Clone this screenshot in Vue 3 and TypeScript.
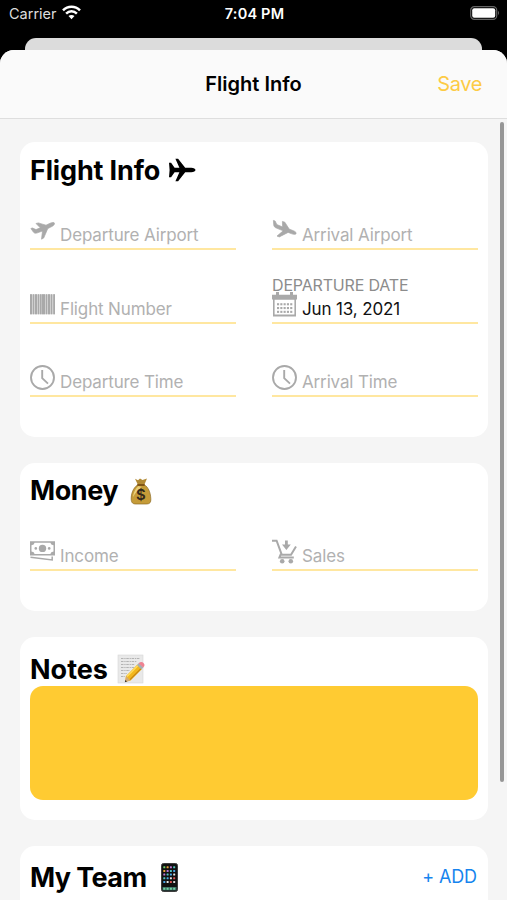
<script setup lang="ts">
interface Field {
  icon: 'depart' | 'arrive' | 'barcode' | 'calendar' | 'clock' | 'cash' | 'cart'
  text: string
  label?: string
}

const flightFields: Field[] = [
  { icon: 'depart', text: 'Departure Airport' },
  { icon: 'arrive', text: 'Arrival Airport' },
  { icon: 'barcode', text: 'Flight Number' },
  { icon: 'calendar', text: 'Jun 13, 2021', label: 'DEPARTURE DATE' },
  { icon: 'clock', text: 'Departure Time' },
  { icon: 'clock', text: 'Arrival Time' },
]
const moneyFields: Field[] = [
  { icon: 'cash', text: 'Income' },
  { icon: 'cart', text: 'Sales' },
]
const groups = [
  { id: 'flight', title: 'Flight Info', fields: flightFields },
  { id: 'money', title: 'Money', fields: moneyFields },
]
const appColors = ['#6fd36b', '#e8e8e8', '#b977d8', '#d8d8d8', '#4aa7e8', '#e9a13b', '#e05252', '#53c7c0']
const apps = Array.from({ length: 20 }, (_, i) => ({
  x: 2.3 + (i % 4) * 3.3,
  y: 3.2 + Math.floor(i / 4) * 3.7,
  color: appColors[(i * 5 + Math.floor(i / 4)) % appColors.length],
}))
const dots = Array.from({ length: 15 }, (_, i) => ({ x: 5 + (i % 5) * 3.3, y: 11.2 + Math.floor(i / 5) * 3.8 }))
</script>

<template>
  <div class="phone">
    <header class="status">
      <div class="carrier">
        <span>Carrier</span>
        <svg width="19" height="15" viewBox="0 0 19 15">
          <g fill="none" stroke="#fff" stroke-width="2.5">
            <path d="M1 5.4C5.8.5 13.2.5 18 5.4" />
            <path d="M4.1 8.6C7.2 5.6 11.8 5.6 14.9 8.6" />
          </g>
          <path d="M6.5 11.1C8.2 9.6 10.8 9.6 12.5 11.1L9.5 14.2Z" fill="#fff" />
        </svg>
      </div>
      <span class="time">7:04 PM</span>
      <svg class="battery" width="30" height="14" viewBox="0 0 30 14">
        <rect x=".7" y=".7" width="26" height="12.6" rx="3.6" fill="none" stroke="#656565" stroke-width="1.2" />
        <rect x="2.2" y="2.2" width="23" height="9.6" rx="2" fill="#fff" />
        <path d="M28 4.8Q30 7 28 9.2Z" fill="#656565" />
      </svg>
    </header>
    <div class="back-sheet"></div>
    <main class="sheet">
      <nav class="nav">
        <span></span>
        <h1>Flight Info</h1>
        <button class="save" type="button">Save</button>
      </nav>
      <div class="content">
        <section v-for="g in groups" :key="g.id" class="card" :class="g.id">
          <h2>
            <span>{{ g.title }}</span>
            <svg v-if="g.id === 'flight'" class="plane" width="28" height="26" viewBox="0 0 28 26">
              <path d="M1 5.8H3.1L6.6 10.7H11.4L7.4 1.8H10.1L17.2 10.7H23.2C25.8 10.7 27.5 11.8 27.5 13S25.8 15.3 23.2 15.3H17.2L10.1 24.2H7.4L11.4 15.3H6.6L3.1 20.2H1L1.6 13Z" />
            </svg>
            <svg v-else class="bag" width="22" height="28" viewBox="0 0 22 28">
              <path d="M5 1.7L8 3.2L10 1.4L12.5 3L17 1.5L14.2 8H8Z" fill="#b28a35" />
              <path d="M7.5 8C3 11 1.1 17 1.2 22C1.3 26 3 27 6 27H16C20 27 21 25.5 20.8 21.5C20.5 15 18 10 14.6 8Z" fill="#c59b38" stroke="#8d6a24" stroke-width=".7" />
              <path d="M8.5 9C5 12 3 17 3.2 20C5 16 9 12 12 10Z" fill="#ead07b" />
              <path d="M7.3 8H14.7" stroke="#7c5115" stroke-width="1.8" />
              <text x="11" y="23.2" text-anchor="middle" font-size="15" font-weight="600" fill="#33291b">$</text>
            </svg>
          </h2>
          <div class="fields">
            <div v-for="f in g.fields" :key="f.text" class="field" :class="{ filled: f.label }">
              <div v-if="f.label" class="caption">{{ f.label }}</div>
              <div class="row">
                <svg class="icon" width="25" height="25" viewBox="0 0 25 25">
                  <path v-if="f.icon === 'depart'" class="bold" d="M.9 10.5L2.5 10L6 11.6L10.3 9.8L6 5.5L8.3 4.9L16 7.2L20.2 5.2C22.4 4.2 24.5 4.2 24.5 5.5C24.4 7.4 22.4 8.2 20.5 9.2L17.8 10.5L13.7 20L11.5 21.2L12.5 13L6.7 15.1C4.8 15.5 4.2 15 3.4 14.1Z" />
                  <path v-else-if="f.icon === 'arrive'" class="bold" d="M1.4 2.4L3.1 3L4.8 6.6L10.6 8.9L10.4 3.4L12.8 4.2L17.2 11.1L21.8 12.9C23.8 13.7 24.6 15 24 15.8C23.3 16.8 20.9 16.3 19.2 15.6L16.1 14.4L7.3 18.9L5 18.1L11.2 12.8L4.4 10.1C2.6 9.3 1.8 8.3 1.7 6.8Z" />
                  <g v-else-if="f.icon === 'barcode'">
                    <path fill="#cfcfcf" d="M0 2.3H25V22.3H0Z" />
                    <path d="M0 2.3H2V22.3H0ZM3 2.3H4V22.3H3ZM5 2.3H7V22.3H5ZM8 2.3H9V22.3H8ZM10 2.3H11V22.3H10ZM11.6 2.3H15V22.3H11.6ZM16 2.3H17V22.3H16ZM18 2.3H20V22.3H18ZM21 2.3H22V22.3H21ZM23.3 2.3H25V22.3H23.3Z" />
                  </g>
                  <g v-else-if="f.icon === 'calendar'">
                    <path fill-rule="evenodd" d="M0 2.8H4V0H7V2.8H18V0H21V2.8H25V7.4H24V24.4H1V7.4H0ZM2.6 7.8V22.6H22.4V7.8Z" />
                    <rect v-for="(d, i) in dots" :key="i" :x="d.x" :y="d.y" width="2.1" height="2.1" />
                  </g>
                  <g v-else-if="f.icon === 'clock'" fill="none" stroke="#a9a9a9">
                    <circle cx="12.5" cy="12.5" r="11.5" stroke-width="1.9" />
                    <path d="M12.2 5V13.2L18 18.6" stroke-width="1.9" />
                  </g>
                  <g v-else-if="f.icon === 'cash'">
                    <path fill-rule="evenodd" d="M0 2.2H25V16.6H0ZM1.5 6.3V12.6Q4.3 12.8 4.6 15.1H20.4Q20.7 12.8 23.5 12.6V6.3Q20.7 6 20.4 3.7H4.6Q4.3 6 1.5 6.3Z" />
                    <circle cx="12.5" cy="9.4" r="3.7" />
                    <circle cx="5.8" cy="9.4" r="1.3" /><circle cx="19.2" cy="9.4" r="1.3" />
                    <path d="M.5 18.2L22.2 21V17.6" fill="none" stroke="#a9a9a9" stroke-width="1.5" />
                  </g>
                  <g v-else>
                    <path d="M0 1.7H4.6L9.8 15.8H19L24 7.6M8.9 14.8L7.4 18.4H21.8" fill="none" stroke="#a9a9a9" stroke-width="2" />
                    <path d="M13 1.5H15.8V5.6H18.8L14.4 11L10 5.6H13Z" />
                    <circle cx="10.2" cy="22.3" r="2.3" /><circle cx="18.8" cy="22.3" r="2.3" />
                  </g>
                </svg>
                <span class="value">{{ f.text }}</span>
              </div>
            </div>
          </div>
        </section>

        <section class="card notes">
          <h2>
            <span>Notes</span>
            <svg class="memo" width="28" height="30" viewBox="0 0 28 30">
              <rect x="1" y="1" width="25" height="28" fill="#e9e9e9" stroke="#d8d8d8" stroke-width=".6" />
              <path d="M4 4.5H23M4 7.5H20M4 10.5H18M4 13.5H17M4 16.5H13M4 19.5H10M4 22.5H8" stroke="#a6a6a6" stroke-width=".8" stroke-dasharray="2.5 .8 1.3 .7" />
              <path d="M9 22L20.4 10.5L25 15L13.6 26.4L8 28Z" fill="#f2b71d" />
              <path d="M10 22.5L21 11.5" stroke="#ffdc5b" stroke-width="1.4" />
              <path d="M13 25.7L24 14.7" stroke="#c58413" stroke-width="1.2" />
              <path d="M9 22L13.4 26.4L8 28Z" fill="#d4aa72" />
              <path d="M8.4 26L10 27.5L7.8 28.3Z" fill="#333" />
              <path d="M20 11L22 9L26.4 13.3L24.4 15.4Z" fill="#a5afb2" />
              <path d="M21.5 9.3Q24.5 7 26.7 9.2Q28.5 11.3 26.2 13.5Z" fill="#ef8291" />
            </svg>
          </h2>
          <div class="note-area"></div>
        </section>

        <section class="card team">
          <h2>
            <span>My Team</span>
            <svg class="mobile" width="17" height="29" viewBox="0 0 17 29">
              <rect x=".5" y=".5" width="16" height="28" rx="2" fill="#111" stroke="#3d3d3d" />
              <rect v-for="(a, i) in apps" :key="i" :x="a.x" :y="a.y" width="2" height="2" rx=".5" :fill="a.color" />
              <rect x="1.5" y="24" width="14" height="3.4" fill="#3b6963" />
              <path d="M2.3 25.7H15" stroke="#72d5a1" stroke-width="2" stroke-dasharray="2 1.3" />
            </svg>
          </h2>
          <button class="add" type="button">+ ADD</button>
        </section>
      </div>
      <div class="scrollbar"></div>
    </main>
  </div>
</template>

<style>
body { margin: 0; background: #000; overflow: hidden; }
</style>

<style scoped>
.phone { width: 507px; height: 900px; overflow: hidden; background: #000; font-family: Inter, "Liberation Sans", sans-serif; display: flex; flex-direction: column; }
.phone * { box-sizing: border-box; }
h1, h2 { margin: 0; }
button { border: 0; padding: 0; background: none; font: inherit; }
.status { height: 38px; flex: none; display: grid; grid-template-columns: 1fr auto 1fr; color: #fff; padding: 0 7px 0 9px; font-size: 14.5px; line-height: 28px; }
.carrier { display: flex; gap: 5px; color: #ddd; }
.carrier svg { margin-top: 5px; }
.time { font-weight: 600; letter-spacing: .2px; }
.battery { justify-self: end; margin-top: 6px; }
.back-sheet { height: 12px; flex: none; margin: 0 25px; background: #dcdcdc; border-radius: 11px 11px 0 0; }
.sheet { position: relative; height: 850px; flex: none; background: #f5f5f5; border-radius: 14px 14px 0 0; overflow: hidden; }
.nav { height: 69px; display: grid; grid-template-columns: 1fr auto 1fr; align-items: center; padding: 0 25px; background: #fafafa; border-bottom: 1px solid #dedede; }
.nav h1 { font-size: 20px; font-weight: 600; }
.save { justify-self: end; color: #fdcb45; font-size: 20px; letter-spacing: -.4px; }
.content { padding: 23px 19px 0 20px; display: flex; flex-direction: column; gap: 26px; }
.card { background: #fff; border-radius: 15px; padding: 0 10px; flex: none; }
.flight { height: 294.5px; }
.money { height: 148px; }
.notes { height: 183.5px; padding-top: 4px; }
.team { height: 148px; display: flex; justify-content: space-between; padding-top: 3px; }
h2 { height: 56px; display: flex; align-items: center; font-size: 27px; line-height: 56px; font-weight: 700; color: #000; }
h2 span { padding-top: 1px; }
.flight h2 span { letter-spacing: -.15px; }
.money h2 span { letter-spacing: -.45px; }
.team h2 span { letter-spacing: -.6px; }
.plane { margin-left: 8px; }
.bag { margin-left: 12px; }
.memo { margin-left: 9px; }
.mobile { margin-left: 15px; }
.fields { display: grid; grid-template-columns: 206px 206px; column-gap: 36px; grid-auto-rows: 73.3px; margin-top: -21px; }
.field { display: flex; flex-direction: column; justify-content: flex-end; border-bottom: 2px solid #ffe7a0; }
.row { display: flex; gap: 5px; height: 30px; }
.icon { flex: none; fill: #a9a9a9; }
.bold { stroke: #a9a9a9; stroke-width: .7; stroke-linejoin: round; }
.value { color: #b1b1b1; font-size: 17px; line-height: 34px; letter-spacing: -.14px; white-space: nowrap; }
.filled .value { color: #111; }
.caption { color: #8c8c8c; font-size: 16px; line-height: 16px; letter-spacing: -.17px; white-space: nowrap; position: relative; top: 1px; }
.notes h2 { height: 45px; line-height: 45px; padding-top: 11px; }
.note-area { height: 114px; background: #ffcb32; border-radius: 13px; }
.add { height: 56px; font-size: 18px; letter-spacing: -.1px; color: #1684ee; margin-top: -1px; margin-right: 1px; }
.scrollbar { position: absolute; right: 3px; top: 72px; width: 4px; height: 660px; border-radius: 2px; background: #969696; }
</style>
